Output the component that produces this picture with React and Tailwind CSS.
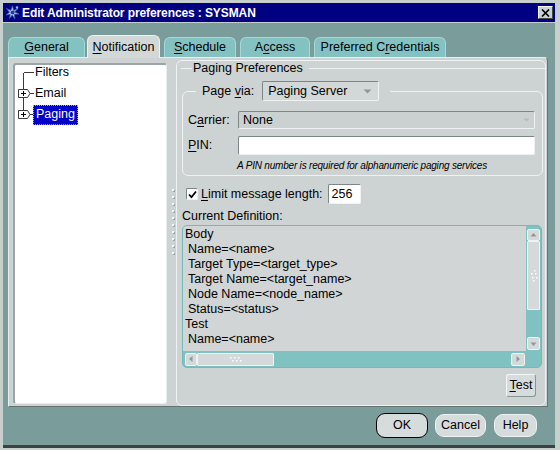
import React from "react";

function U({ children }) {
  return <span className="underline underline-offset-[2px] decoration-1">{children}</span>;
}

function AppIcon() {
  return (
    <svg width="15" height="15" viewBox="0 0 15 15" className="ml-[2px] shrink-0">
      <path d="M7.5 1 L8.6 5.6 L13 3.5 L9.6 7 L14 9 L9.2 9.2 L10 14 L7.2 10 L4.5 13.5 L5.3 9.3 L1 10 L4.6 7.2 L1.5 3.5 L5.8 5.4 Z" fill="#c8d4ec" stroke="#3a5cb0" strokeWidth="0.8" />
      <circle cx="7.5" cy="7.5" r="2" fill="#2040a0" />
      <circle cx="12" cy="2.5" r="1.2" fill="#80c0ff" />
    </svg>
  );
}

function CloseBtn() {
  return (
    <div className="ml-auto mr-[2px] w-[15px] h-[13px] bg-[#c8d0d0] border-t border-l border-[#f2f6f6] border-b border-r border-b-[#404848] border-r-[#404848] flex items-center justify-center">
      <svg width="9" height="8" viewBox="0 0 9 8">
        <path d="M1 0.5 L8 7.5 M8 0.5 L1 7.5" stroke="#000" strokeWidth="1.6" />
      </svg>
    </div>
  );
}

function Tab({ children, className = "", active = false }) {
  if (active) {
    return (
      <div className={"relative z-10 -mb-px h-[23px] bg-[#d2d7d7] rounded-t-[6px] border-t border-l border-r border-[#eef2f2] flex items-center justify-center " + className}>
        {children}
      </div>
    );
  }
  return (
    <div className={"h-[20px] bg-[#84c2c2] rounded-t-[6px] border-t border-l border-r border-[#a6d8d8] flex items-center justify-center " + className}>
      {children}
    </div>
  );
}

function PlusBox({ lastRow }) {
  return (
    <svg width="18" height="21" viewBox="0 0 18 21" className="shrink-0" shapeRendering="crispEdges">
      <path d={lastRow ? "M7.5 0 V10.5" : "M7.5 0 V21"} stroke="#3a3a3a" strokeWidth="1" />
      <path d="M14 10.5 H18" stroke="#3a3a3a" strokeWidth="1" />
      <path d="M2.5 6.5 H11.5 L14 10.5 L11.5 14.5 H2.5 Z" fill="#fff" stroke="#3a3a3a" strokeWidth="1" shapeRendering="auto" />
      <path d="M4.5 10.5 H10 M7.5 8 V13" stroke="#000" strokeWidth="1" />
    </svg>
  );
}

function Tree() {
  return (
    <div className="mt-[5px] w-[154px] h-[341px] bg-white rounded-[3px] border-t-2 border-l-2 border-[#9aa6a6] border-b border-r border-b-[#e8eeee] border-r-[#e8eeee] pl-[1px]">
      <div className="h-[18px] flex items-start">
        <svg width="18" height="18" viewBox="0 0 18 18" className="shrink-0" shapeRendering="crispEdges">
          <path d="M7.5 7.5 V18 M7.5 7.5 H18" stroke="#3a3a3a" strokeWidth="1" />
        </svg>
        <span className="ml-[1px] leading-[15px]">Filters</span>
      </div>
      <div className="h-[21px] flex items-center">
        <PlusBox />
        <span className="ml-[1px]">Email</span>
      </div>
      <div className="h-[21px] flex items-center">
        <PlusBox lastRow />
        <span className="ml-[-1px] h-[20px] px-[2px] bg-[#0000c8] text-white border border-dotted border-[#9a9aff] flex items-center">
          Paging
        </span>
      </div>
    </div>
  );
}

function Splitter() {
  return (
    <div className="w-[9px] flex flex-col items-center pt-[131px] gap-[5px]">
      {[...Array(10)].map((_, i) => (
        <div key={i} className="w-[2px] h-[2px] bg-[#f4f8f8] shadow-[1px_1px_0_#9aa6a6] ml-[2px]" />
      ))}
    </div>
  );
}

const sunken =
  "border-t border-l border-[#7c8686] border-b border-r border-b-[#eef2f2] border-r-[#eef2f2] rounded-[2px]";

function ArrowBtn({ dir, className = "" }) {
  const paths = {
    up: "M1.5 5.5 L4.5 2 L7.5 5.5 Z",
    down: "M1.5 2.5 L4.5 6 L7.5 2.5 Z",
    left: "M5.5 1 L2 4 L5.5 7 Z",
    right: "M2.5 1 L6 4 L2.5 7 Z",
  };
  return (
    <div className={"bg-[#d4dada] rounded-[2px] border border-[#eef2f2] flex items-center justify-center " + className}>
      <svg width="9" height="8" viewBox="0 0 9 8">
        <path d={paths[dir]} fill="#8e9898" />
      </svg>
    </div>
  );
}

function Grip({ horizontal }) {
  const dots = horizontal
    ? [[2, 2], [6, 2], [10, 2], [4, 5], [8, 5], [12, 5]]
    : [[5, 1], [2, 4], [6, 4], [3, 8], [7, 8], [4, 11]];
  return (
    <svg width={horizontal ? 15 : 10} height={horizontal ? 8 : 13} viewBox={horizontal ? "0 0 15 8" : "0 0 10 13"}>
      {dots.map(([x, y], i) => (
        <rect key={i} x={x} y={y} width="1.5" height="1.5" fill="#fff" />
      ))}
    </svg>
  );
}

function Definition() {
  const lines = [
    ["Body", false],
    ["Name=<name>", true],
    ["Target Type=<target_type>", true],
    ["Target Name=<target_name>", true],
    ["Node Name=<node_name>", true],
    ["Status=<status>", true],
    ["Test", false],
    ["Name=<name>", true],
  ];
  return (
    <div className="mt-[3px] ml-[5px] w-[360px] h-[143px] rounded-[5px] border border-[#74b8b8] bg-[#80c2c2] flex flex-col overflow-hidden">
      <div className="h-[125px] flex">
        <div className="flex-1 bg-[#d1d5d5] pt-[1px] pl-[2px] leading-[15px] overflow-hidden whitespace-pre">
          {lines.map(([t, ind], i) => (
            <div key={i} className={ind ? "pl-[3px]" : ""}>
              {t}
            </div>
          ))}
        </div>
        <div className="w-[15px] flex flex-col items-center pt-[3px] pb-[1px]">
          <ArrowBtn dir="up" className="w-[13px] h-[12px]" />
          <div className="w-[13px] h-[69px] bg-[#d4dada] border border-[#eef2f2] rounded-[1px] flex items-center justify-center">
            <Grip />
          </div>
          <div className="flex-1" />
          <ArrowBtn dir="down" className="w-[13px] h-[13px]" />
        </div>
      </div>
      <div className="h-[16px] flex items-center pl-[2px]">
        <ArrowBtn dir="left" className="w-[12px] h-[13px]" />
        <div className="w-[77px] h-[13px] bg-[#d4dada] border border-[#eef2f2] rounded-[1px] flex items-center justify-center">
          <Grip horizontal />
        </div>
        <div className="flex-1" />
        <ArrowBtn dir="right" className="w-[14px] h-[13px]" />
        <div className="w-[16px]" />
      </div>
    </div>
  );
}

function RightPanel() {
  return (
    <div className="mt-[2px] w-[370px] h-[346px] rounded-[6px] border border-[#eef2f2] flex flex-col">
      <div className="h-[14px] flex items-center">
        <div className="ml-[4px] w-[11px] h-px bg-[#eef2f2]" />
        <span className="px-[1px] leading-none">Paging Preferences</span>
        <div className="ml-[5px] flex-1 h-px bg-[#eef2f2]" />
      </div>

      <fieldset className="mt-[6px] ml-[5px] mr-[2px] rounded-[6px] border border-[#eef2f2] px-[5px] pb-[3px]">
        <legend className="ml-[8px] pl-[6px] pr-[11px] h-[20px] flex items-center">
          <span>
            Page <U>v</U>ia:
          </span>
          <div className={"ml-[8px] w-[117px] h-[20px] bg-[#d2d8d8] flex items-center pl-[5px] pr-[6px] " + sunken}>
            <span className="flex-1">Paging Server</span>
            <svg width="9" height="5" viewBox="0 0 9 5">
              <path d="M0.5 0.5 H8.5 L4.5 4.5 Z" fill="#8e9898" />
            </svg>
          </div>
        </legend>

        <div className="mt-[10px] h-[18px] flex items-center">
          <span className="w-[50px]">
            C<U>a</U>rrier:
          </span>
          <div className={"w-[297px] h-[18px] bg-[#cbd1d1] flex items-center pl-[4px] pr-[4px] " + sunken}>
            <span className="flex-1">None</span>
            <svg width="7" height="4" viewBox="0 0 7 4">
              <path d="M0.5 0.5 H6.5 L3.5 3.5 Z" fill="#b4bcbc" />
            </svg>
          </div>
        </div>

        <div className="mt-[7px] h-[19px] flex items-center">
          <span className="w-[50px]">
            <U>P</U>IN:
          </span>
          <div className={"w-[297px] h-[19px] bg-white " + sunken} />
        </div>

        <div className="mt-[5px] pl-[49px] text-[10px] leading-[12px] italic tracking-[-0.2px]">
          A PIN number is required for alphanumeric paging services
        </div>
      </fieldset>

      <div className="mt-[8px] h-[20px] flex items-center">
        <div className={"ml-[9px] w-[12px] h-[12px] bg-white flex items-center justify-center " + sunken}>
          <svg width="9" height="9" viewBox="0 0 9 9">
            <path d="M1 4.5 L3.5 7.2 L8 1.5" fill="none" stroke="#000" strokeWidth="1.8" />
          </svg>
        </div>
        <span className="ml-[3px]">
          <U>L</U>imit message length:
        </span>
        <div className={"ml-[5px] w-[33px] h-[20px] bg-white flex items-center pl-[3px] " + sunken}>256</div>
      </div>

      <div className="mt-[6px] h-[12px] leading-[12px] pl-[5px]">Current Definition:</div>

      <Definition />

      <div className="mt-[6px] self-end mr-[9px] w-[30px] h-[23px] bg-[#d6dcdc] rounded-[3px] border-t border-l border-[#f2f6f6] border-b border-r border-b-[#8a9494] border-r-[#8a9494] flex items-center justify-center">
        <span>
          <U>T</U>est
        </span>
      </div>
    </div>
  );
}

export default function App() {
  return (
    <div className="w-[560px] h-[450px] bg-[#c6cece] pt-[3px] pl-[3px] pr-[5px] pb-[2px] flex flex-col font-['Liberation_Sans',Arial,sans-serif] text-[12.5px] text-black select-none">
      <div className="h-[19px] shrink-0 bg-[#000080] flex items-center">
        <AppIcon />
        <span className="ml-[2px] text-white font-bold text-[12px] leading-none tracking-[-0.1px]">
          Edit Administrator preferences : SYSMAN
        </span>
        <CloseBtn />
      </div>

      <div className="mt-px flex-1 bg-[#7a9c9a] border-b-[3px] border-[#3a4242] flex flex-col">
        <div className="pt-[12px] pl-[5px] h-[34px] flex items-end">
          <Tab className="w-[77px]">
            <U>G</U>eneral
          </Tab>
          <Tab active className="ml-[2px] w-[73px]">
            <U>N</U>otification
          </Tab>
          <Tab className="ml-[4px] w-[72px]">
            <U>S</U>chedule
          </Tab>
          <Tab className="ml-[4px] w-[70px]">
            A<U>c</U>cess
          </Tab>
          <Tab className="ml-[4px] w-[132px]">
            Preferred C<U>r</U>edentials
          </Tab>
        </div>

        <div className="ml-[5px] w-[540px] h-[350px] bg-[#cdd3d3] rounded-tr-[4px] border-t border-l border-[#e8eeee] border-b border-r border-b-[#66726f] border-r-[#66726f] flex pl-[4px]">
          <Tree />
          <Splitter />
          <RightPanel />
        </div>

        <div className="mt-[6px] pr-[18px] flex justify-end items-center">
          <div className="w-[52px] h-[25px] bg-[#d6dcdc] rounded-[9px] border border-black flex items-center justify-center">
            OK
          </div>
          <div className="ml-[7px] w-[51px] h-[23px] bg-[#d6dcdc] rounded-[9px] border border-[#eef2f2] flex items-center justify-center">
            Cancel
          </div>
          <div className="ml-[8px] w-[43px] h-[23px] bg-[#d6dcdc] rounded-[9px] border border-[#eef2f2] flex items-center justify-center">
            Help
          </div>
        </div>
      </div>
    </div>
  );
}
